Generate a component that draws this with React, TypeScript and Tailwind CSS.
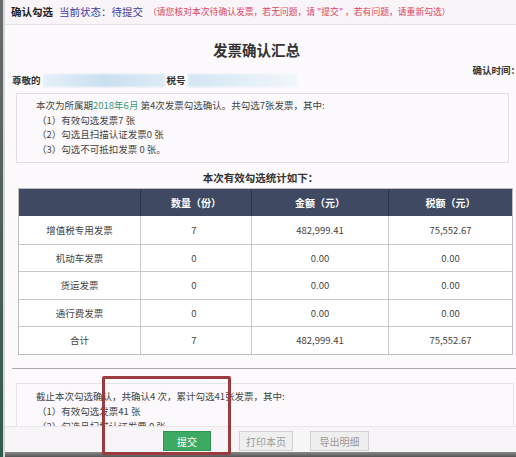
import React from "react";

const rows = [
  { name: "增值税专用发票", count: "7", amount: "482,999.41", tax: "75,552.67" },
  { name: "机动车发票", count: "0", amount: "0.00", tax: "0.00" },
  { name: "货运发票", count: "0", amount: "0.00", tax: "0.00" },
  { name: "通行费发票", count: "0", amount: "0.00", tax: "0.00" },
  { name: "合计", count: "7", amount: "482,999.41", tax: "75,552.67" },
];

export default function App() {
  return (
    <div
      className="relative flex w-[516px] h-[457px] overflow-hidden bg-[#fcfafc] text-[#333]"
      style={{ fontFamily: '"Noto Sans CJK SC", "Liberation Sans", sans-serif' }}
    >
      {/* window edge */}
      <div className="w-[3px] shrink-0 bg-gradient-to-b from-[#6b6b6b] via-[#4d5f58] to-[#2f5d4d]" />
      <div className="w-[2px] shrink-0 bg-[#d6d6d6]" />

      <div className="flex-1 flex flex-col min-w-0">
        {/* header */}
        <div className="h-[25px] shrink-0 flex items-center pl-[6px] bg-[#f9f4f8] border-b border-[#e6e1e5] whitespace-nowrap leading-[14px]">
          <span className="text-[10.5px] font-bold text-[#222]">确认勾选</span>
          <span className="ml-[6px] text-[10.5px] text-[#3d3fa8]">当前状态：待提交</span>
          <span className="ml-[5px] text-[8.8px] text-[#d8475e]">
            （请您核对本次待确认发票，若无问题，请 "提交" ，若有问题，请重新勾选）
          </span>
        </div>

        {/* title */}
        <div className="mt-[16px] h-[18px] shrink-0 flex items-center justify-center pr-[8px] leading-[18px]">
          <span className="text-[14.5px] font-bold text-[#333]">发票确认汇总</span>
        </div>

        <div className="mt-[5px] h-[12px] flex justify-end text-[9.5px] font-bold leading-[12px] text-[#333] -mr-[4px] whitespace-nowrap">
          确认时间：
        </div>

        {/* recipient */}
        <div className="flex items-center h-[14px] -mt-[3px] pl-[7px] text-[9.5px] font-bold leading-[14px]">
          <span>尊敬的</span>
          <span className="ml-[2px] w-[122px] h-[13px] bg-gradient-to-r from-[#e6f0f8] via-[#c9dff0] to-[#dcebf5] blur-[1px]" />
          <span className="ml-[2px]">税号</span>
          <span className="ml-[2px] w-[110px] h-[13px] bg-gradient-to-r from-[#d4e6f3] via-[#e2eef7] to-[#f2f7fb] blur-[1px]" />
        </div>

        {/* current summary */}
        <div className="ml-[11px] mr-[7px] mt-[6px] h-[70px] shrink-0 border border-[#e3e0e3] bg-[#fbf9fb] pl-[19px] pt-[4px] text-[9.5px] leading-[14.7px] text-[#444]">
          <div>
            本次为所属期<span className="text-[#3a9a7a]">2018年6月</span> 第4次发票勾选确认。共勾选7张发票，其中:
          </div>
          <div className="pl-[1px]">（1）有效勾选发票7 张</div>
          <div className="pl-[1px]">（2）勾选且扫描认证发票0 张</div>
          <div className="pl-[1px]">（3）勾选不可抵扣发票 0 张。</div>
        </div>

        <div className="mt-[7px] h-[16px] shrink-0 flex items-center justify-center text-[10.5px] font-bold text-[#333] leading-[16px]">
          本次有效勾选统计如下：
        </div>

        {/* table */}
        <div className="ml-[13px] mt-[2px] w-[495px] shrink-0 border border-[#bdbdbd] bg-white">
          <div className="grid grid-cols-[122px_111px_137px_1fr] h-[27px] bg-[#3f4a62] text-white text-[10px] font-bold leading-[14px]">
            <div className="border-r border-[#2d3547]" />
            <div className="flex items-center justify-center border-r border-[#2d3547]">数量（份）</div>
            <div className="flex items-center justify-center border-r border-[#2d3547]">金额（元）</div>
            <div className="flex items-center justify-center">税额（元）</div>
          </div>
          {rows.map((r, i) => (
            <div
              key={r.name}
              className={
                "grid grid-cols-[122px_111px_137px_1fr] h-[27.5px] text-[9.5px] text-[#444] leading-[14px] " +
                (i > 0 ? "border-t border-[#c8c8c8]" : "")
              }
            >
              <div className="flex items-center justify-center border-r border-[#c8c8c8]">{r.name}</div>
              <div className="flex items-center justify-center border-r border-[#c8c8c8] pr-[4px]">{r.count}</div>
              <div className="flex items-center justify-center border-r border-[#c8c8c8]">{r.amount}</div>
              <div className="flex items-center justify-center">{r.tax}</div>
            </div>
          ))}
        </div>

        <div className="mt-[13px] ml-[7px] h-[1px] shrink-0 bg-[#a9a9a9]" />

        {/* cumulative summary */}
        <div className="ml-[11px] mr-[2px] mt-[14px] flex-1 min-h-0 overflow-hidden border border-[#e6e3e6] border-b-0 bg-[#fbf9fb] pl-[19px] pt-[5px] text-[9.5px] leading-[15px] text-[#444]">
          <div>截止本次勾选确认，共确认4 次，累计勾选41张发票，其中:</div>
          <div className="pl-[1px]">（1）有效勾选发票41 张</div>
          <div className="pl-[1px]">（2）勾选且扫描认证发票 0 张</div>
        </div>

        {/* buttons */}
        <div className="h-[26px] shrink-0 flex items-start pl-[158px] pt-[4px] bg-[#f7f5f7] border-t border-[#e9e6e9]">
          <button className="w-[48px] h-[20px] bg-[#3daa63] text-white text-[10px] border border-[#2f9353]">提交</button>
          <button className="ml-[28px] w-[54px] h-[20px] bg-[#efefef] text-[#9a9a9a] text-[10px] border border-[#d2d2d2]">打印本页</button>
          <button className="ml-[17px] w-[59px] h-[20px] bg-[#eeeeee] text-[#9a9a9a] text-[10px] border border-[#d2d2d2]">导出明细</button>
        </div>
        <div className="h-[5px] shrink-0 bg-gradient-to-b from-[#8a8a8a] to-[#555]" />
      </div>

      {/* highlight annotation */}
      <div className="absolute left-[102px] top-[376px] w-[129px] h-[79px] border-[3px] border-[#9c3b3f] rounded-[2px]" />
    </div>
  );
}
